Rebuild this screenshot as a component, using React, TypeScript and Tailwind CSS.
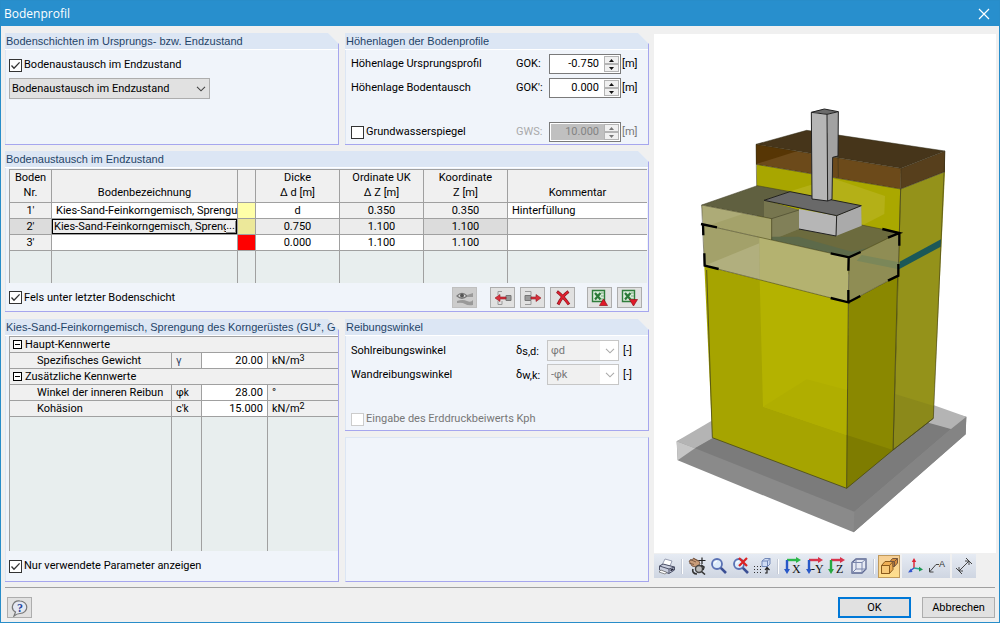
import { useState } from 'react';
import type { ReactNode } from 'react';

const soilRows = [
  { nr: "1'", name: 'Kies-Sand-Feinkorngemisch, Sprengu', color: 'bg-[#ffffa8]', d: 'd', uk: '0.350', z: '0.350', note: 'Hinterfüllung' },
  { nr: "2'", name: 'Kies-Sand-Feinkorngemisch, Spreng', color: 'bg-[#ece89a]', d: '0.750', uk: '1.100', z: '1.100', note: '' },
  { nr: "3'", name: '', color: 'bg-[#ff0000]', d: '0.000', uk: '1.100', z: '1.100', note: '' },
];

function Group({ title, className = '', children }: { title: string; className?: string; children: ReactNode }) {
  return (
    <section
      className={`flex min-w-0 flex-col border-r border-b border-[#a6a6ee] bg-[#f0f4fa] [clip-path:polygon(0_0,calc(100%-11px)_0,100%_11px,100%_100%,0_100%)] ${className}`}
    >
      <h2 className="h-[17px] shrink-0 overflow-hidden border-b border-white bg-[#dce6f4] pl-px font-['Liberation_Sans',Arial,sans-serif] text-[11px] leading-4 whitespace-nowrap text-[#1f4468]">
        {title}
      </h2>
      <div className="flex min-w-0 flex-1 flex-col border-l border-[#dce6f4]">{children}</div>
    </section>
  );
}

function Check({ label, checked = false, disabled = false }: { label: string; checked?: boolean; disabled?: boolean }) {
  const [on, setOn] = useState(checked);
  return (
    <label className={`flex h-[14px] items-center gap-[2px] whitespace-nowrap ${disabled ? 'text-[#777]' : ''}`}>
      <span className="relative flex">
        <input
          type="checkbox"
          checked={on}
          disabled={disabled}
          onChange={(e) => setOn(e.target.checked)}
          className="size-[13px] appearance-none border border-[#333] bg-white disabled:border-[#ccc]"
        />
        {on && (
          <svg viewBox="0 0 13 13" className="pointer-events-none absolute inset-0 size-[13px]">
            <path d="M2.5 6.5 5 9.3 10.6 3.4" fill="none" stroke="#333" strokeWidth="1.3" />
          </svg>
        )}
      </span>
      {label}
    </label>
  );
}

function Chevron({ color = '#444' }: { color?: string }) {
  return (
    <svg viewBox="0 0 10 6" className="pointer-events-none absolute top-[8px] right-[4px] h-[6px] w-[10px]">
      <path d="M1 .8 5 4.8 9 .8" fill="none" stroke={color} strokeWidth="1.1" />
    </svg>
  );
}

function HeightRow({ label, symbol, value, disabled = false }: { label: ReactNode; symbol: string; value: string; disabled?: boolean }) {
  const [text, setText] = useState(value);
  const step = (by: number) => setText((Number(text) + by).toFixed(3));
  return (
    <div className="flex h-[20px] items-center">
      <div className="flex-1">{label}</div>
      <label htmlFor={symbol} className={`w-[33px] ${disabled ? 'text-[#aaa]' : ''}`}>
        {symbol}:
      </label>
      <div className="flex h-[20px] w-[72px] border border-[#7a7a7a] bg-white p-px">
        <input
          id={symbol}
          value={text}
          disabled={disabled}
          onChange={(e) => setText(e.target.value)}
          className="w-[53px] pr-[5px] text-right disabled:bg-[#c0c0c0] disabled:text-[#838383]"
        />
        <span className="flex flex-1 flex-col">
          {[0.1, -0.1].map((by) => (
            <button
              key={by}
              type="button"
              disabled={disabled}
              aria-label={by > 0 ? `${symbol} +` : `${symbol} -`}
              onClick={() => step(by)}
              className="flex h-[8px] items-center justify-center border border-[#b4b4b4] bg-[#f0f0f0]"
            >
              <svg viewBox="0 0 5 3" className="h-[3px] w-[5px]">
                <path d={by > 0 ? 'M0 3 2.5 0 5 3z' : 'M0 0 2.5 3 5 0z'} fill={disabled ? '#777' : '#111'} />
              </svg>
            </button>
          ))}
        </span>
      </div>
      <span className={`w-[24px] pl-px ${disabled ? 'text-[#777]' : ''}`}>[m]</span>
    </div>
  );
}

function FrictionRow({ label, index, value }: { label: string; index: string; value: string }) {
  return (
    <div className="flex h-[21px] items-center">
      <label htmlFor={index} className="flex-1">
        {label}
      </label>
      <span className="w-[31px] whitespace-nowrap">
        δ<span className="relative top-px">{index}:</span>
      </span>
      <div className="relative w-[72px]">
        <select
          id={index}
          disabled
          className="block h-[21px] w-full appearance-none border border-[#c6c6c6] bg-[linear-gradient(90deg,#f0f0f0_74%,#fff_74%)] pl-[3px] text-[#777] opacity-100"
        >
          <option>{value}</option>
        </select>
        <Chevron color="#aaa" />
      </div>
      <span className="w-[26px] pl-[4px]">[-]</span>
    </div>
  );
}

function IconButton({ label, disabled = false, children }: { label: string; disabled?: boolean; children: ReactNode }) {
  return (
    <button
      type="button"
      aria-label={label}
      disabled={disabled}
      className="flex h-[21px] w-[25px] shrink-0 items-center justify-center border border-[#adadad] bg-[#e1e1e1] disabled:border-[#bfbfbf] disabled:bg-[#ccc]"
    >
      <svg viewBox="0 0 18 18" className="size-[18px]" fill="none">
        {children}
      </svg>
    </button>
  );
}

function ExcelSheet() {
  return (
    <>
      <path d="M1.5 1.5h12v11h-12z" fill="#dcecdc" stroke="#2f7d3b" strokeWidth="1.4" />
      <path d="M10 4h3M10 7h3M10 10h3" stroke="#7aac80" />
      <path d="M4 4 9.5 10.5M9.5 4 4 10.500" stroke="#2b7a38" strokeWidth="2.2" />
    </>
  );
}

function SoilTable() {
  const cell = 'border-t border-l border-[#a0a0a0]';
  const head = 'border-t border-l border-[#a0a0a0] pb-[2px] font-normal';
  return (
    <table className="w-full table-fixed border-separate border-spacing-0 text-center leading-[15px] whitespace-nowrap">
      <colgroup>
        <col className="w-[42px]" />
        <col className="w-[186px]" />
        <col className="w-[18px]" />
        <col className="w-[84px]" />
        <col className="w-[84px]" />
        <col className="w-[84px]" />
        <col />
      </colgroup>
      <thead>
        <tr className="h-[33px] bg-[#f0f0f0] align-bottom">
          <th className={head}>Boden<br />Nr.</th>
          <th className={head}>Bodenbezeichnung</th>
          <th className={head} />
          <th className={head}>Dicke<br />Δ d [m]</th>
          <th className={head}>Ordinate UK<br />Δ Z [m]</th>
          <th className={head}>Koordinate<br />Z [m]</th>
          <th className={head}>Kommentar</th>
        </tr>
      </thead>
      <tbody>
        {soilRows.map((r, i) => {
          const active = i === 1;
          const fixed = active ? 'bg-[#dcdcdc]' : 'bg-[#f0f0f0]';
          return (
            <tr key={r.nr} className={`h-[16px] ${active ? 'bg-[#ececec]' : 'bg-white'}`}>
              <td className={`${cell} ${fixed}`}>{r.nr}</td>
              <td className={`${cell} overflow-hidden p-0 text-left`}>
                {active ? (
                  <div className="flex h-[15px] items-center border border-black pl-px leading-[13px]">
                    <span className="min-w-0 flex-1 overflow-hidden">{r.name}</span>
                    <button type="button" aria-label="Boden wählen" className="h-[12px] w-[10px] shrink-0 border-r border-b border-[#888] bg-[#f0f0f0] leading-[8px]">
                      ...
                    </button>
                  </div>
                ) : (
                  <div className="overflow-hidden pl-[4px]">{r.name}</div>
                )}
              </td>
              <td className={`${cell} ${r.color}`} />
              <td className={cell}>{r.d}</td>
              <td className={`${cell} ${i === 0 ? 'bg-[#f0f0f0]' : ''}`}>{r.uk}</td>
              <td className={`${cell} ${fixed}`}>{r.z}</td>
              <td className={`${cell} pl-[4px] text-left`}>{r.note}</td>
            </tr>
          );
        })}
        <tr className="h-[33px] bg-[#e8eeee]">
          {[0, 1, 2, 3, 4, 5, 6].map((n) => (
            <td key={n} className={cell} />
          ))}
        </tr>
      </tbody>
    </table>
  );
}

function ParameterTable() {
  const cell = 'border-t border-l border-[#a0a0a0]';
  const section = (title: string) => (
    <tr className="h-[16px] bg-[#f0f0f0]">
      <td colSpan={4} className={`${cell} p-0`}>
        <div className="flex items-center gap-[3px] pl-[3px]">
          <button type="button" aria-label={title} className="flex size-[9px] items-center justify-center border border-black bg-white">
            <span className="h-px w-[5px] bg-black" />
          </button>
          {title}
        </div>
      </td>
    </tr>
  );
  const row = (name: string, symbol: ReactNode, value: string, unit: ReactNode) => (
    <tr className="h-[16px] bg-[#f0f0f0]">
      <td className={`${cell} overflow-hidden pl-[27px]`}>{name}</td>
      <td className={`${cell} pl-[4px]`}>{symbol}</td>
      <td className={`${cell} bg-white pr-[4px] text-right`}>{value}</td>
      <td className={`${cell} pl-[4px]`}>{unit}</td>
    </tr>
  );
  const power = (n: number) => <sup className="-top-[3px] text-[9px]">{n}</sup>;
  return (
    <table className="h-full w-full table-fixed border-separate border-spacing-0 leading-[15px] whitespace-nowrap">
      <colgroup>
        <col />
        <col className="w-[30px]" />
        <col className="w-[66px]" />
        <col className="w-[71px]" />
      </colgroup>
      <tbody>
        {section('Haupt-Kennwerte')}
        {row('Spezifisches Gewicht', <span className="text-[#346]">γ</span>, '20.00', <>kN/m{power(3)}</>)}
        {section('Zusätzliche Kennwerte')}
        {row('Winkel der inneren Reibun', <>φ<span className="text-[10px]">k</span></>, '28.00', '°')}
        {row('Kohäsion', <>c'<span className="text-[10px]">k</span></>, '15.000', <>kN/m{power(2)}</>)}
        <tr className="bg-[#e8eeee]">
          {[0, 1, 2, 3].map((n) => (
            <td key={n} className={cell} />
          ))}
        </tr>
      </tbody>
    </table>
  );
}

function SoilModel() {
  return (
    <svg viewBox="-33 -168 1026 1557" className="w-full bg-white" role="img" aria-label="Bodenmodell">
      {/* rock slab */}
      <path d="M35 1054 425 868 904 980 902 1033 566 1327 38 1111z" fill="#8a8a8a" />
      <path d="M35 1054 140 992 145 1043 90 1075z" fill="#b4b4b4" />
      <path d="M35 1054 90 1075 38 1111z" fill="#c6c6c6" />
      <path d="M90 1075 160 1035 700 990 790 995 858 1017 568 1265z" fill="#7b7b7b" />
      <path d="M568 1265 858 1017 904 980 902 1033 566 1327z" fill="#848484" />
      <path d="M790 940 904 980 858 1017 790 998z" fill="#b4b4b4" />

      {/* rear soil block */}
      <path d="M275 223 707 297 702 560 276 540z" fill="#a8a600" />
      <path d="M707 297 840 245 805 985 684 1080z" fill="#94921a" />
      <path d="M690 912 807 948 805 985 684 1080z" fill="#8b891a" />
      <path d="M273 163 425 121 840 183 708 235z" fill="#46351a" />
      <path d="M273 163 708 235 707 297 273 223z" fill="#6c4a1a" />
      <path d="M273 163 395 184 273 222z" fill="#573605" />
      <path d="M708 235 840 183 840 245 707 297z" fill="#573f1c" />
      <path d="M378 303 503 263 707 297 704 430 590 407 503 330z" fill="#aaa800" />
      <path d="M378 303 503 265 660 318 658 372 590 407 590 347z" fill="#b4b017" />
      <path d="M704 515 828 448 827 470 702 538z" fill="#1b5858" />
      <path
        d="M273 163 425 121 840 183 805 985 684 1080 707 297 708 235zM708 235 840 183M273 163 275 290M273 223 707 297 840 245M519 198 520 262"
        fill="none"
        stroke="#302d18"
        strokeWidth="2"
        strokeOpacity=".75"
      />

      {/* lower layer in front */}
      <path d="M118 527 550 637 545 1195 142 1043z" fill="#a6a400" />
      <path d="M284 568 550 637 545 1035 294 950z" fill="#b4b200" />
      <path d="M294 950 425 868 546 900 545 1035z" fill="#b0ae00" />
      <path d="M550 637 700 556 684 1080 545 1195z" fill="#8a8800" />
      <path d="M545 1035 684 1080 545 1195z" fill="#7e7c00" />
      <path d="M125 540 142 1043 545 1195 684 1080 805 985M550 637 545 1195M698 556 684 1080" fill="none" stroke="#4b4a18" strokeWidth="2.5" />

      {/* exchanged layers */}
      <path d="M110 345 277 287 375 305 297 331 402 360 320 386z" fill="#606040" />
      <path d="M110 345 320 386 320 450 115 404z" fill="#a4a26a" />
      <path d="M110 345 240 370 135 405 115 404z" fill="#adab77" />
      <path d="M320 386 402 360 590 405 703 428 552 502 320 450z" fill="#6c6b3e" />
      <path d="M297 331 402 360 402 417 320 450 320 386 297 380z" fill="#77764f" />
      <path d="M320 386 402 360 402 417 320 450z" fill="#818058" />
      <path d="M320 440 400 440 560 485 610 473 552 502 320 450z" fill="#5d6a4a" />
      <path d="M115 404 552 502 550 637 118 527z" fill="#b4b270" />
      <path d="M115 404 283 442 284 568 118 527z" fill="#a3a16a" />
      <path d="M118 527 283 460 284 568z" fill="#b1af7e" />
      <path d="M552 502 703 428 700 556 550 637z" fill="#8f8d54" />
      <path d="M590 495 703 517 702 538 575 512z" fill="#7b8759" />
      <path
        d="M110 345 277 287 375 305M110 345 320 386 402 360M320 386V450M110 345 118 527 550 637 700 556 703 428 552 502 115 404M552 502 550 637M590 405 703 428M707 297 703 428"
        fill="none"
        stroke="#3c3b22"
        strokeWidth="2"
        strokeOpacity=".8"
      />

      {/* footing and column */}
      <path d="M402 357 515 377 513 438 402 417z" fill="#b6b6b6" />
      <path d="M515 377 589 347 590 407 513 438z" fill="#aaa" />
      <path d="M297 331 375 305 589 347 515 377z" fill="#696969" />
      <path d="M297 331 375 305 589 347 515 377zM515 377 513 438 402 417" fill="none" stroke="#222" strokeWidth="3" />
      <path d="M439 68 486 73 488 333 441 327z" fill="#b6b6b6" />
      <path d="M486 73 520 66 519 198 503 202 501 328 488 333z" fill="#a2a2a2" />
      <path d="M439 66 478 57 520 65 486 73z" fill="#6b6b6b" />
      <path d="M439 67 478 57 520 65 519 198 503 202 501 328 488 333 441 327zM439 67 486 73 520 65M486 73 488 333" fill="none" stroke="#222" strokeWidth="3" />

      {/* selection marks */}
      <path
        d="M108 402 156 412M114 402 115 436M118 490 119 527 161 537M497 490 552 502 587 486M551 502 550 542M550 600 550 637 497 624M550 637 586 618M652 417 703 429 669 443M703 429V467M700 522 700 557 669 572"
        fill="none"
        stroke="#000"
        strokeWidth="7"
      />
    </svg>
  );
}

function Tool({ label, active = false, children }: { label: string; active?: boolean; children: ReactNode }) {
  return (
    <button
      type="button"
      aria-label={label}
      className={`flex h-[23px] w-[22px] shrink-0 items-center justify-center ${active ? 'border border-[#c09a5c] bg-linear-to-b from-[#f6cf96] to-[#ffdf8c]' : ''}`}
    >
      <svg viewBox="0 0 18 18" className="size-[18px] shrink-0" fill="none">
        {children}
      </svg>
    </button>
  );
}

function Separator() {
  return <span className="mx-[3px] h-[15px] w-[2px] shrink-0 border-l border-[#c4cad6] bg-white" />;
}

function AxisTool({ axis, h, v, label }: { axis: string; h: string; v: string; label: string }) {
  return (
    <Tool label={label}>
      <path d="M3 3H14" stroke={h} strokeWidth="2.4" />
      <path d="M12 0 17 3 12 6z" fill={h} />
      <path d="M3 3V14" stroke={v} strokeWidth="2.4" />
      <path d="M0 12H6L3 17z" fill={v} />
      <text x={axis.length > 1 ? 5 : 8} y="16" fontSize="12" fontFamily="Liberation Serif, serif" fill="#111">
        {axis}
      </text>
    </Tool>
  );
}

function Magnifier() {
  return (
    <>
      <circle cx="7" cy="7" r="5" fill="#dcebfa" stroke="#5a72b4" strokeWidth="1.8" />
      <path d="M10.8 10.8 16 16" stroke="#3a4f94" strokeWidth="2.6" />
      <path d="M4.5 6.5A3 3 0 0 1 7 4" stroke="#fff" strokeWidth="1.2" />
    </>
  );
}

function ViewToolbar() {
  const strip = 'flex h-[24px] items-center bg-linear-to-b from-[#e6ebf3] to-[#cfd6e2]';
  return (
    <div className="flex gap-[2px]">
      <div className={`${strip} pl-[2px]`}>
        <Tool label="Drucken">
          <path d="M4 8 7 2 14 4 12 9z" fill="#fff" stroke="#8088a0" strokeWidth=".8" />
          <path d="M1.5 9 5 7 16.5 10V13L11 16.5 1.5 13z" fill="#c9cede" stroke="#4a4f66" />
          <path d="M1.5 9 11 12 16.5 10M11 12V16" stroke="#4a4f66" />
          <path d="M3 13 1 15 7 17 9 15.5z" fill="#fff" stroke="#666" strokeWidth=".7" />
          <path d="M12.5 13.5 15.5 12" stroke="#202438" strokeWidth="1.5" />
        </Tool>
        <Separator />
        <Tool label="Verschieben, Zoomen, Drehen">
          <path d="M1 4 6 1.5 11 4 12 7 8 10 4 9z" fill="#c99d7a" stroke="#6b4a36" strokeWidth=".8" />
          <path d="M2 2.5 8 5M1 6 6 7.5M5 1 10 4" stroke="#6b4a36" strokeWidth=".8" />
          <path d="M14 .5V7M10.5 3.5H17.5" stroke="#222" strokeWidth="1.2" />
          <circle cx="11" cy="12" r="3.5" fill="#bbb" stroke="#444" strokeWidth="1.4" />
          <path d="M13.5 14.5 17 17.5M5 12C4 15 6 17 9 17M13 8 16 10 15 13" stroke="#333" strokeWidth="1.6" />
        </Tool>
        <Tool label="Zoomen">
          <Magnifier />
        </Tool>
        <Tool label="Alles zeigen">
          <Magnifier />
          <path d="M7 1 15 9M15 1 7 9" stroke="#d22" strokeWidth="2.2" />
        </Tool>
        <Tool label="Raster">
          <path d="M8 4 11 1.5H16V7L13.5 9.5H8z" fill="#cfdcf4" stroke="#7288b8" />
          <path d="M8 4H13.5V9.5M13.5 4 16 1.5" stroke="#7288b8" />
          <path d="M0 9.5H8M0 12.5H8M0 15.5H8" stroke="#333" strokeWidth="1" strokeDasharray="1 2" />
          <path d="M11 16H13V11.5M11 13 13 10.5 15.5 13" stroke="#222" strokeWidth="1.2" />
        </Tool>
        <Separator />
        <AxisTool label="Ansicht X" axis="X" h="#2cb84a" v="#2858c8" />
        <AxisTool label="Ansicht -Y" axis="-Y" h="#d8344c" v="#2858c8" />
        <AxisTool label="Ansicht Z" axis="Z" h="#d8344c" v="#28a840" />
        <Tool label="Isometrie">
          <path d="M2 5.5 6 2H16V12L12 16H2z" fill="#e6eaf4" stroke="#5a6590" strokeWidth="1.3" />
          <path d="M2 5.5H12V16M12 5.5 16 2M6 2V12H16M6 12 2 16" stroke="#7a86ac" />
        </Tool>
        <Separator />
        <Tool label="Projektion" active>
          <path d="M5 4.5H13V12.5L9.5 16.5H1.5V8.5z" fill="#edae55" stroke="#8a5a1c" />
          <path d="M1.5 8.5H9.5V16.5H1.5z" fill="#f6c878" stroke="#8a5a1c" />
          <path d="M9.5 8.5 13 4.5" stroke="#8a5a1c" />
          <path d="M10 4.5 12.5 1.5H17.5V6L14.5 9.5H13V4.5z" fill="#d88d3c" stroke="#75573d" />
          <path d="M13 4.5H14.5V9.5M14.5 4.5 17.5 1.5" stroke="#75573d" />
        </Tool>
      </div>
      <div className={`${strip} px-[2px]`}>
        <Tool label="Achsenkreuz">
          <path d="M8 11V3" stroke="#d23" strokeWidth="1.4" />
          <path d="M5.8 5 8 1 10.2 5z" fill="#d23" />
          <path d="M8 11 14 12" stroke="#2a9" strokeWidth="1.4" />
          <path d="M13 9.8 17 12.5 13 14.5z" fill="#1a9850" />
          <path d="M8 11 4 14" stroke="#35c" strokeWidth="1.4" />
          <path d="M5 11.5 2 15.5 6.5 15z" fill="#35c" />
        </Tool>
        <Tool label="Beschriftung">
          <path d="M1.5 15 8 7.5H11M1.5 11V15H5.5" stroke="#444" />
          <text x="11" y="10" fontSize="9" fontFamily="Liberation Sans, sans-serif" fill="#333">A</text>
        </Tool>
      </div>
      <div className={`${strip} px-px`}>
        <Tool label="Bemaßung">
          <path d="M4 14 14 4M4 10V14H8M10 4H14V8M1 11 7 17M11 1 17 7" stroke="#444" />
        </Tool>
      </div>
    </div>
  );
}

export default function App() {
  return (
    <div className="flex min-h-screen flex-col border border-[#288dc9] bg-[#f0f0f0] font-[Roboto,'Liberation_Sans',sans-serif] text-[11px] leading-[14px] text-black">
      <header className="flex h-[25px] shrink-0 items-center justify-between bg-[#288fcd] pr-[9px] pl-[3px] text-white">
        <h1 className="font-['Open_Sans',sans-serif] text-[12px]">Bodenprofil</h1>
        <button type="button" aria-label="Schließen">
          <svg viewBox="0 0 12 12" className="size-[12px]">
            <path d="M1 1 11 11M11 1 1 11" stroke="#fff" strokeWidth="1.2" />
          </svg>
        </button>
      </header>

      <main className="grid flex-1 grid-cols-[644fr_342fr] gap-[5px] pt-[7px] pr-[3px] pb-[5px] pl-[4px]">
        <div className="flex min-w-0 flex-col gap-[6px]">
          <div className="grid grid-cols-[334fr_304fr] gap-[6px]">
            <Group title="Bodenschichten im Ursprungs- bzw. Endzustand" className="min-h-[112px]">
              <div className="flex flex-col gap-[6px] pt-[8px] pl-[3px]">
                <Check label="Bodenaustausch im Endzustand" checked />
                <div className="relative w-[201px]">
                  <select aria-label="Bodenschicht" className="block h-[21px] w-full appearance-none border border-[#adadad] bg-[#e1e1e1] pl-[2px]">
                    <option>Bodenaustausch im Endzustand</option>
                  </select>
                  <Chevron />
                </div>
              </div>
            </Group>
            <Group title="Höhenlagen der Bodenprofile">
              <div className="flex flex-col gap-[4px] pt-[4px] pr-[3px] pl-[5px]">
                <HeightRow label="Höhenlage Ursprungsprofil" symbol="GOK" value="-0.750" />
                <HeightRow label="Höhenlage Bodentausch" symbol="GOK'" value="0.000" />
                <div className="pt-[20px]">
                  <HeightRow label={<Check label="Grundwasserspiegel" />} symbol="GWS" value="10.000" disabled />
                </div>
              </div>
            </Group>
          </div>

          <Group title="Bodenaustausch im Endzustand">
            <div className="pt-px pr-px pl-[3px]">
              <SoilTable />
            </div>
            <div className="flex items-center pt-[4px] pr-[6px] pb-[3px] pl-[3px]">
              <div className="flex-1">
                <Check label="Fels unter letzter Bodenschicht" checked />
              </div>
              <IconButton label="Schicht anzeigen" disabled>
                <path d="M1 7Q6 1.5 11 7 6 11.5 1 7z" fill="#ddd" stroke="#777" strokeWidth="1.2" />
                <circle cx="6" cy="6.5" r="2" fill="#555" />
                <path d="M11 6 17 4V8L11 8zM1 12Q7 10 11 12T17 11V16Q12 17 9 15T1 14z" fill="#999" />
              </IconButton>
              <div className="ml-[13px] flex gap-[5px]">
                <IconButton label="Zeile einfügen">
                  <path d="M4 2.5H8M4 2.5V6M4 15.5H8V12M4 15.5V12" stroke="#999" />
                  <path d="M12 6.5H17V11.5H12z" fill="#999" stroke="#777" />
                  <path d="M12 8H6V5.5L1 9 6 12.5V10H12z" fill="#d9303c" stroke="#8e1c24" strokeWidth=".6" />
                </IconButton>
                <IconButton label="Zeile anhängen">
                  <path d="M1 2.5H7V6M1 15.5H7V12" stroke="#999" />
                  <path d="M1 6.5H7V11.5H1z" fill="#999" stroke="#777" />
                  <path d="M7 8H12V5.5L17 9 12 12.5V10H7z" fill="#d9303c" stroke="#8e1c24" strokeWidth=".6" />
                </IconButton>
                <IconButton label="Löschen">
                  <path d="M3 2.5Q9 7 15 15.5M14.5 2.5Q8 7 4 15.5" stroke="#8c1820" strokeWidth="3" />
                  <path d="M3.5 3Q9 7 14.5 15M14 3Q8 7 4.5 15" stroke="#e02030" strokeWidth="1.8" />
                </IconButton>
              </div>
              <div className="ml-[12px] flex gap-[5px]">
                <IconButton label="Export nach Excel">
                  <ExcelSheet />
                  <path d="M8.5 16.5 12.5 10 16.5 16.5z" fill="#e01828" stroke="#901018" strokeWidth=".7" />
                </IconButton>
                <IconButton label="Import aus Excel">
                  <ExcelSheet />
                  <path d="M8.5 10.5H16.5L12.5 17z" fill="#e01828" stroke="#901018" strokeWidth=".7" />
                </IconButton>
              </div>
            </div>
          </Group>

          <div className="grid flex-1 grid-cols-[334fr_304fr] gap-[6px] pt-px">
            <Group title="Kies-Sand-Feinkorngemisch, Sprengung des Korngerüstes (GU*, GT">
              <div className="flex-1 pl-[3px]">
                <ParameterTable />
              </div>
              <div className="pt-[8px] pb-[8px] pl-[3px]">
                <Check label="Nur verwendete Parameter anzeigen" checked />
              </div>
            </Group>
            <div className="flex min-w-0 flex-col gap-[6px]">
              <Group title="Reibungswinkel" className="h-[112px]">
                <div className="flex flex-col gap-[3px] pt-[4px] pr-[3px] pl-[5px]">
                  <FrictionRow label="Sohlreibungswinkel" index="s,d" value="φd" />
                  <FrictionRow label="Wandreibungswinkel" index="w,k" value="-φk" />
                  <div className="pt-[24px]">
                    <Check label="Eingabe des Erddruckbeiwerts Kph" disabled />
                  </div>
                </div>
              </Group>
              <div className="flex-1 border border-t-[#dce6f4] border-r-[#a6a6ee] border-b-[#a6a6ee] border-l-[#dce6f4] bg-[#f0f4fa]" />
            </div>
          </div>
        </div>

        <div className="flex min-w-0 flex-col gap-px pt-px">
          <SoilModel />
          <ViewToolbar />
        </div>
      </main>

      <footer className="mx-[4px] flex items-start border-t border-[#a0a0a0] pt-[9px] pb-[4px] pl-[2px]">
        <IconButton label="Hilfe">
          <path d="M9 2A6.5 6 0 0 1 9 14.5Q6 14.5 3 17L4.5 13A6.5 6 0 0 1 9 2z" fill="#e4e8f2" stroke="#777" strokeWidth="1.2" />
          <text x="6" y="12.5" fontSize="12" fontWeight="bold" fontFamily="Liberation Serif, serif" fill="#2446a0">?</text>
        </IconButton>
        <div className="ml-auto flex gap-[11px]">
          <button type="button" className="h-[21px] w-[73px] border-2 border-[#0078d7] bg-[#e1e1e1] leading-none">
            OK
          </button>
          <button type="button" className="h-[21px] w-[73px] border border-[#adadad] bg-[#e1e1e1] leading-none">
            Abbrechen
          </button>
        </div>
      </footer>
    </div>
  );
}
